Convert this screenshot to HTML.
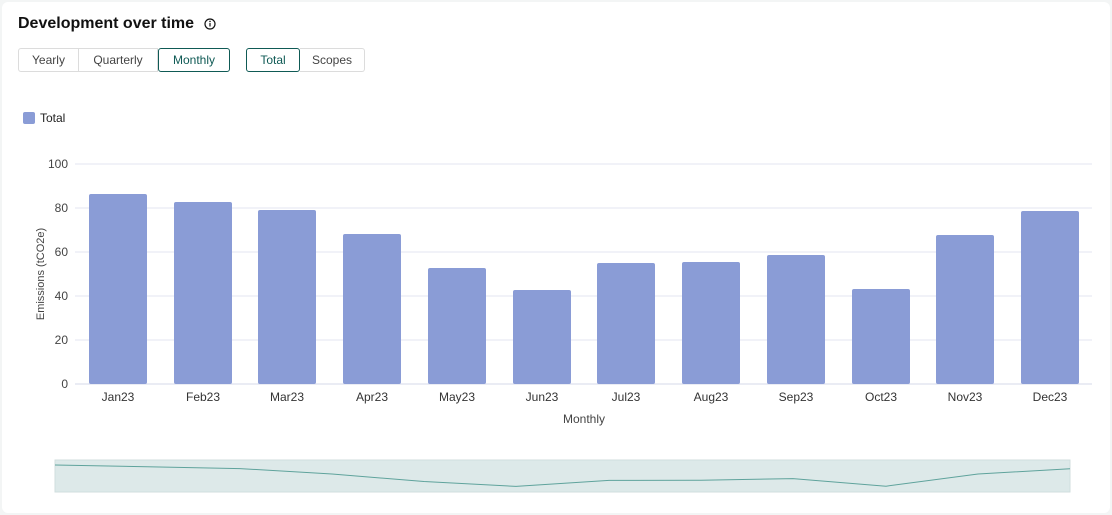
<!DOCTYPE html>
<html><head><meta charset="utf-8"><style>
body{margin:0;width:1112px;height:515px;background:#f3f5f5;font-family:"Liberation Sans",sans-serif;overflow:hidden;position:relative}
.card{position:absolute;left:2px;top:2px;width:1108px;height:511px;background:#fff;border-radius:6px}
h1{position:absolute;left:18px;top:15px;margin:0;font-size:16px;font-weight:bold;color:#111}
.grp{position:absolute;top:48px;height:22px;display:flex;font-size:12px;color:#444}
.grp div{border:1px solid #dcdcdc;line-height:22px;background:#fff;text-align:center;box-sizing:border-box;height:24px}
.grp div.on{border:1px solid #0f5a55;color:#0f5a55;border-radius:3px}
</style></head><body>
<div class="card"></div>
<h1>Development over time</h1>
<svg style="position:absolute;left:204px;top:18px" width="12" height="12" viewBox="0 0 12 12"><circle cx="6" cy="6" r="5" fill="none" stroke="#111" stroke-width="1.2"/><rect x="5.4" y="5" width="1.2" height="3.5" fill="#111"/><circle cx="6" cy="3.4" r="0.8" fill="#111"/></svg>
<div class="grp" style="left:18px"><div style="border-radius:3px 0 0 3px;width:61px">Yearly</div><div style="border-left:none;width:79px">Quarterly</div><div class="on" style="width:72px">Monthly</div></div>
<div class="grp" style="left:246px"><div class="on" style="width:54px">Total</div><div style="border-left:none;border-radius:0 3px 3px 0;width:65px">Scopes</div></div>
<svg style="position:absolute;left:0;top:0" width="1112" height="515" font-family="Liberation Sans,sans-serif">
<rect x="23" y="112" width="12" height="12" rx="2" fill="#8a9cd6"/>
<text x="40" y="122" font-size="12" fill="#222">Total</text>
<g stroke="#e3e6f2" stroke-width="1">
<line x1="75" x2="1092" y1="164" y2="164"/><line x1="75" x2="1092" y1="208" y2="208"/><line x1="75" x2="1092" y1="252" y2="252"/><line x1="75" x2="1092" y1="296" y2="296"/><line x1="75" x2="1092" y1="340" y2="340"/><line x1="75" x2="1092" y1="384" y2="384" stroke="#d5d9ea"/>
</g>
<g font-size="12" fill="#444" text-anchor="end">
<text x="68" y="168">100</text><text x="68" y="212">80</text><text x="68" y="256">60</text><text x="68" y="300">40</text><text x="68" y="344">20</text><text x="68" y="388">0</text>
</g>
<text transform="translate(44,274) rotate(-90)" font-size="11" fill="#444" text-anchor="middle">Emissions (tCO2e)</text>
<g fill="#8a9cd6">
<rect x="89" y="194" width="58" height="190" rx="2"/>
<rect x="174" y="202" width="58" height="182" rx="2"/>
<rect x="258" y="210" width="58" height="174" rx="2"/>
<rect x="343" y="234" width="58" height="150" rx="2"/>
<rect x="428" y="268" width="58" height="116" rx="2"/>
<rect x="513" y="290" width="58" height="94" rx="2"/>
<rect x="597" y="263" width="58" height="121" rx="2"/>
<rect x="682" y="262" width="58" height="122" rx="2"/>
<rect x="767" y="255" width="58" height="129" rx="2"/>
<rect x="852" y="289" width="58" height="95" rx="2"/>
<rect x="936" y="235" width="58" height="149" rx="2"/>
<rect x="1021" y="211" width="58" height="173" rx="2"/>
</g>
<g font-size="12" fill="#333" text-anchor="middle">
<text x="118" y="401">Jan23</text><text x="203" y="401">Feb23</text><text x="287" y="401">Mar23</text><text x="372" y="401">Apr23</text><text x="457" y="401">May23</text><text x="542" y="401">Jun23</text><text x="626" y="401">Jul23</text><text x="711" y="401">Aug23</text><text x="796" y="401">Sep23</text><text x="881" y="401">Oct23</text><text x="965" y="401">Nov23</text><text x="1050" y="401">Dec23</text>
</g>
<text x="584" y="423" font-size="12" fill="#444" text-anchor="middle">Monthly</text>
<rect x="55" y="460" width="1015" height="32" fill="#dde9e9" stroke="#d0dede"/>
<polyline fill="none" stroke="#5fa39c" stroke-width="1" points="55,465 147,466.8 240,468.6 332,474 424,481.5 516,486.4 609,480.4 701,480.2 793,478.6 886,486.2 978,474 1070,468.8"/>
</svg>
</body></html>
